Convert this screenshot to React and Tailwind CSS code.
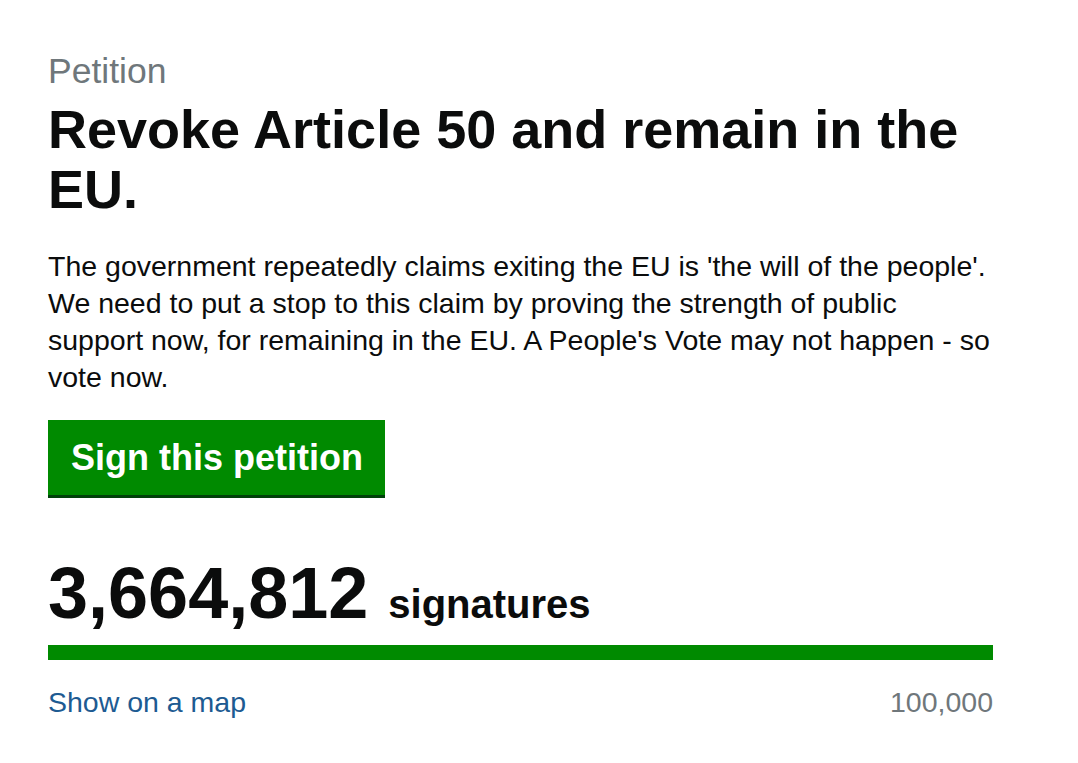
import React from "react";

const font = { fontFamily: "'Liberation Sans', Arial, sans-serif" };

export default function App() {
  return (
    <div className="min-h-screen bg-white text-[#0b0c0c]" style={font}>
      <main className="pl-[48px] pt-[51px] w-[1000px]">
        <div className="text-[35.5px] leading-[40px] text-[#6f777b]">Petition</div>
        <h1 className="mt-[8px] text-[54px] leading-[60px] font-bold w-[960px]">
          Revoke Article 50 and remain in the EU.
        </h1>

        <p className="mt-[29px] text-[28.5px] leading-[37px] w-[950px]">
          The government repeatedly claims exiting the EU is 'the will of the people'. We need to put a
          stop to this claim by proving the strength of public support now, for remaining in the EU. A
          People's Vote may not happen - so vote now.
        </p>

        <button className="mt-[24px] h-[78px] w-[337px] bg-[#008a00] border-b-[3px] border-[#00410a] text-white text-[36px] leading-none font-bold flex items-center pl-[23px]">
          Sign this petition
        </button>

        <div className="mt-[59px] flex items-baseline w-[945px]">
          <span className="text-[72px] leading-none font-bold">3,664,812</span>
          <span className="ml-[20px] text-[40px] leading-none font-bold">signatures</span>
        </div>

        <div className="mt-[16px] w-[945px] h-[15px] bg-[#008a00]" />

        <div className="mt-[25px] w-[945px] flex justify-between text-[28.5px] leading-[35px]">
          <a href="#" className="text-[#1d5b92]">Show on a map</a>
          <span className="text-[#6f777b]">100,000</span>
        </div>
      </main>
    </div>
  );
}
